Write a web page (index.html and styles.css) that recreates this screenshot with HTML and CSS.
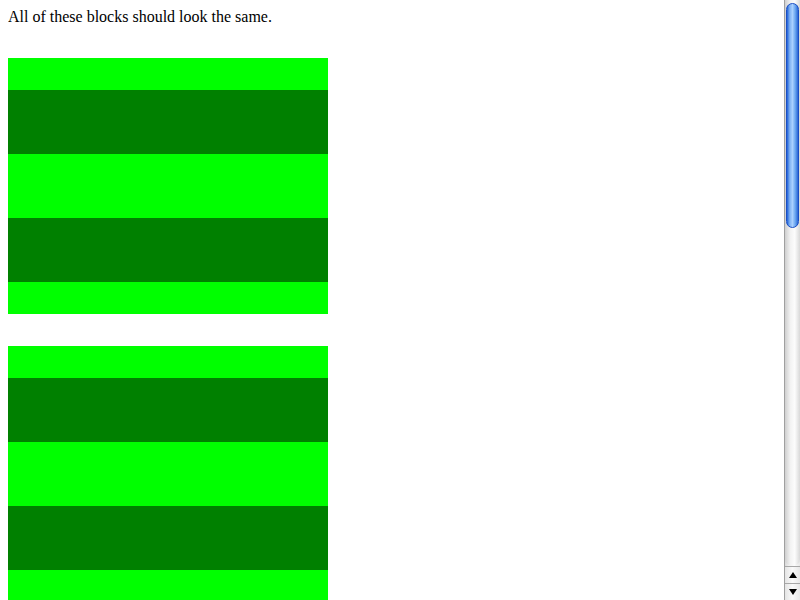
FILE: index.html
```html
<!DOCTYPE html>
<html>
<head>
<meta charset="utf-8">
<title>Blocks</title>
<link rel="stylesheet" href="styles.css">
</head>
<body>
<div class="intro">All of these blocks should look the same.</div>
<div class="block"><div class="s1"></div><div class="s2"></div><div class="s1b"></div><div class="s2"></div><div class="s1"></div></div>
<div class="block"><div class="s1"></div><div class="s2"></div><div class="s1b"></div><div class="s2"></div><div class="s1"></div></div>
<div class="block"><div class="s1"></div><div class="s2"></div><div class="s1b"></div><div class="s2"></div><div class="s1"></div></div>
<div class="block"><div class="s1"></div><div class="s2"></div><div class="s1b"></div><div class="s2"></div><div class="s1"></div></div>
<div class="block"><div class="s1"></div><div class="s2"></div><div class="s1b"></div><div class="s2"></div><div class="s1"></div></div>
<div class="scrollbar">
  <div class="track"><div class="thumb"></div></div>
  <div class="btn up"><span class="tri-up"></span></div>
  <div class="btn down"><span class="tri-down"></span></div>
</div>
</body>
</html>
```
FILE: styles.css
```css
html { scrollbar-width: none; }
html::-webkit-scrollbar { display: none; }
body {
  margin: 8px;
  font-family: "Liberation Serif", "Times New Roman", serif;
  font-size: 16px;
  line-height: 18px;
  color: #000;
  background: #fff;
}
.intro { margin: 0; }
.block {
  width: 320px;
  margin: 32px 0;
}
.s1 { height: 32px; background: #00ff00; }
.s1b { height: 64px; background: #00ff00; }
.s2 { height: 64px; background: #008000; }

.scrollbar {
  position: fixed;
  top: 0;
  right: 0;
  width: 15px;
  height: 600px;
  display: flex;
  flex-direction: column;
  background: linear-gradient(to right, #d8d8d8, #f4f4f4 30%, #ffffff 60%, #e8e8e8);
  border-left: 1px solid #a0a0a0;
}
.track {
  flex: 1;
  padding: 3px 1px 0 1px;
  border-bottom-left-radius: 7px;
  border-bottom-right-radius: 7px;
  background: linear-gradient(to right, #cfcfcf, #f2f2f2 35%, #fcfcfc 65%, #d8d8d8);
}
.thumb {
  height: 225px;
  border-radius: 7px;
  border: 1px solid #1a4fc4;
  box-sizing: border-box;
  background: linear-gradient(to right, #1f5fd8, #7fb2f2 25%, #a9d0ff 50%, #6aa6f0 75%, #2a66d6);
}
.btn {
  height: 16px;
  display: flex;
  align-items: center;
  justify-content: center;
  border-top: 1px solid #a8a8a8;
  background: linear-gradient(to right, #e4e4e4, #fafafa 50%, #e8e8e8);
}
.tri-up {
  width: 0; height: 0;
  border-left: 4px solid transparent;
  border-right: 4px solid transparent;
  border-bottom: 6px solid #000;
}
.tri-down {
  width: 0; height: 0;
  border-left: 4px solid transparent;
  border-right: 4px solid transparent;
  border-top: 6px solid #000;
}
```
